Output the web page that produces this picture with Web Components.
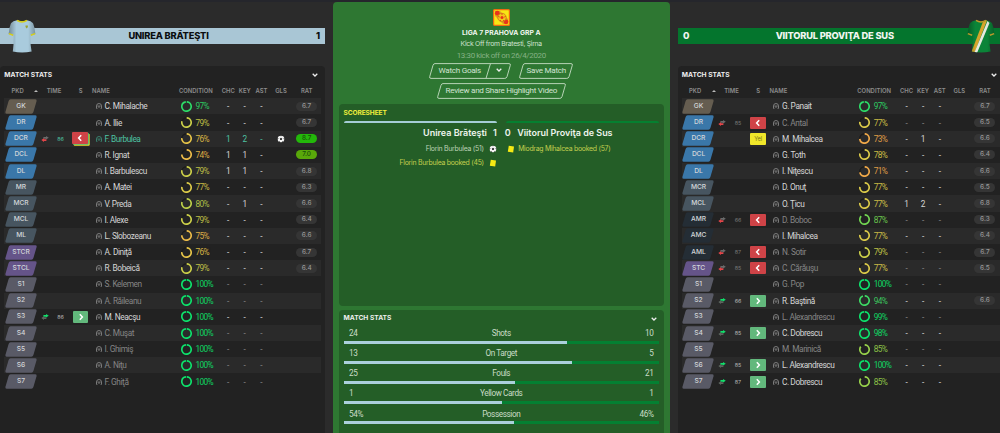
<!DOCTYPE html>
<html lang="en">
<head>
<meta charset="utf-8">
<title>Match Review</title>
<style>
  html, body {
    margin: 0;
    width: 1000px;
    height: 433px;
    overflow: hidden;
    background: #2b2b2b;
  }
</style>
</head>
<body>
<match-review></match-review>

<script>
function attach(el, html) {
  const template = document.createElement('template');
  template.innerHTML = html;
  el.attachShadow({ mode: 'open' });
  el.shadowRoot.appendChild(template.content.cloneNode(true));
}

const homePlayers = [
  // pos, name, condition, chances, key, rating, extras
  ['GK', 'C. Mihalache', 97, '-', '-', '6.7'],
  ['DR', 'A. Ilie', 79, '-', '-', '6.7'],
  ['DCR', 'F. Burbulea', 76, '1', '2', '8.7', { time: '86', sub: 'off', booked: true, goal: true, tone: 'star' }],
  ['DCL', 'R. Ignat', 74, '1', '1', '7.0'],
  ['DL', 'I. Barbulescu', 79, '1', '1', '6.8'],
  ['MR', 'A. Matei', 77, '-', '-', '6.3'],
  ['MCR', 'V. Preda', 80, '-', '1', '6.6'],
  ['MCL', 'I. Alexe', 79, '-', '-', '6.4'],
  ['ML', 'L. Slobozeanu', 75, '-', '-', '6.6'],
  ['STCR', 'A. Diniţă', 76, '-', '-', '6.7'],
  ['STCL', 'R. Bobeică', 79, '-', '-', '6.4'],
  ['S1', 'S. Kelemen', 100, '-', '-', '', { tone: 'dim' }],
  ['S2', 'A. Răileanu', 100, '-', '-', '', { tone: 'dim' }],
  ['S3', 'M. Neacşu', 100, '-', '-', '', { time: '86', sub: 'on' }],
  ['S4', 'C. Muşat', 100, '-', '-', '', { tone: 'dim' }],
  ['S5', 'I. Ghimiş', 100, '-', '-', '', { tone: 'dim' }],
  ['S6', 'A. Niţu', 100, '-', '-', '', { tone: 'dim' }],
  ['S7', 'F. Ghiţă', 100, '-', '-', '', { tone: 'dim' }]
];

const awayPlayers = [
  ['GK', 'G. Panait', 97, '-', '-', '6.7'],
  ['DR', 'C. Antal', 77, '-', '-', '6.5', { time: '85', sub: 'off', tone: 'dim' }],
  ['DCR', 'M. Mihalcea', 73, '-', '1', '6.6', { sub: 'yel' }],
  ['DCL', 'G. Toth', 78, '-', '-', '6.4'],
  ['DL', 'I. Niţescu', 71, '-', '-', '6.6'],
  ['MCR', 'D. Onuţ', 77, '-', '-', '6.5'],
  ['MCL', 'O. Ţicu', 77, '1', '2', '6.8'],
  ['AMR', 'D. Boboc', 87, '-', '-', '6.3', { time: '66', sub: 'off', tone: 'dim' }],
  ['AMC', 'I. Mihalcea', 77, '-', '-', '6.4'],
  ['AML', 'N. Sotir', 79, '-', '-', '6.7', { time: '87', sub: 'off', tone: 'dim' }],
  ['STC', 'C. Cărăuşu', 77, '-', '-', '6.5', { time: '85', sub: 'off', tone: 'dim' }],
  ['S1', 'G. Pop', 100, '-', '-', '', { tone: 'dim' }],
  ['S2', 'R. Baştină', 94, '-', '-', '6.6', { time: '66', sub: 'on' }],
  ['S3', 'L. Alexandrescu', 99, '-', '-', '', { tone: 'dim' }],
  ['S4', 'C. Dobrescu', 98, '-', '-', '', { time: '85', sub: 'on' }],
  ['S5', 'M. Marinică', 85, '-', '-', '', { tone: 'dim' }],
  ['S6', 'L. Alexandrescu', 100, '-', '-', '', { time: '85', sub: 'on' }],
  ['S7', 'C. Dobrescu', 85, '-', '-', '', { time: '87', sub: 'on' }]
];

const columns = '32px 16px 15px 25.5px 11px var(--name-col, 75.5px) 40px 16.5px 16.5px 17px 22px 29.3px';

const chevron = '<svg width="6" height="4" viewBox="0 0 6 4"><path d="M.7.8 3 3 5.3.8" fill="none" stroke="#eee" stroke-width="1.3"/></svg>';

const football = '<svg width="8" height="8" viewBox="0 0 8 8"><circle cx="4" cy="4" r="3.3" fill="#f4f4f4"/><path d="M4 2.7 5.2 3.6 4.8 5H3.2L2.8 3.6ZM3.3.4h1.4L4 1.4ZM.5 2.9 1.6 3.3.8 4.7ZM7.5 2.9 6.4 3.3 7.2 4.7ZM1.8 7 2.4 5.9 3.1 7.3ZM6.2 7 5.6 5.9 4.9 7.3Z" fill="#333"/></svg>';

class PositionPill extends HTMLElement {
  connectedCallback() {
    const pos = this.getAttribute('pos');
    let fill = '#3a77a9';
    if (pos === 'GK') fill = '#655d50';
    else if (/^ST/.test(pos)) fill = '#655489';
    else if (/^AM/.test(pos)) fill = '#242d35';
    else if (/^M/.test(pos)) fill = '#475560';
    else if (/^S/.test(pos)) fill = '#595a66';
    attach(this, `
    <style>
      :host { display: grid; width: 32px; height: 15px; }
      svg, span { grid-area: 1 / 1; }
      span {
        text-align: center;
        font: 500 6.7px/15.8px Inter, sans-serif;
        letter-spacing: -0.1px;
        color: #d3d6d9;
      }
    </style>
    <svg width="32" height="15" viewBox="0 0 32 15">
      <path d="M5.6.3H30.4q1.6 0 1.2 1.6L28.4 13.1q-.5 1.6-2 1.6H1.6q-1.6 0-1.2-1.6L3.6 1.9Q4.1.3 5.6.3Z" fill="${fill}"/>
    </svg>
    <span>${pos}</span>`);
  }
}

class ConditionRing extends HTMLElement {
  connectedCallback() {
    const value = Number(this.getAttribute('value'));
    let color = '#f0a94a';
    if (value >= 98) color = '#0ee26c';
    else if (value >= 97) color = '#2edc69';
    else if (value >= 94) color = '#3fd965';
    else if (value >= 87) color = '#72d653';
    else if (value >= 85) color = '#98d24c';
    else if (value >= 80) color = '#bdd04a';
    else if (value >= 79) color = '#ccd04a';
    else if (value >= 77) color = '#dccb4a';
    else if (value >= 76) color = '#e6c449';
    else if (value >= 74) color = '#edbc49';
    const len = Math.min(value, 97.5) * 0.3;
    const gap = 30 - len;
    attach(this, `
    <style>
      :host {
        display: flex;
        align-items: center;
        gap: 3.4px;
        padding-left: 1px;
        color: ${color};
        font: 8.3px/16px Roboto, sans-serif;
        letter-spacing: -0.6px;
      }
      svg { flex: none; }
      span { opacity: 0.9; }
    </style>
    <svg width="11" height="11" viewBox="0 0 11 11">
      <circle cx="5.5" cy="5.5" r="4.7" fill="none" stroke="#1b1b1b" stroke-width="1.5"/>
      <circle cx="5.5" cy="5.5" r="4.7" fill="none" stroke="${color}" stroke-width="1.7"
        pathLength="30" stroke-dasharray="${len} ${gap}" transform="rotate(-88 5.5 5.5)"/>
    </svg>
    <span>${value}%</span>`);
  }
}

class SubBadge extends HTMLElement {
  connectedCallback() {
    const kind = this.getAttribute('kind');
    const fill = { off: '#cf4347', on: '#62b87c', yel: '#f1e72a' }[kind];
    const arrow = kind === 'off' ? 'M9.2 3.2 6.6 6l2.6 2.8' : 'M6.8 3.2 9.4 6 6.8 8.8';
    const mark = kind === 'yel'
      ? '<span>Yel</span>'
      : `<svg width="16" height="12" viewBox="0 0 16 12"><path d="${arrow}" fill="none" stroke="#fff" stroke-width="1.5"/></svg>`;
    attach(this, `
    <style>
      :host {
        display: grid;
        place-items: center;
        width: 15.5px;
        height: 12px;
        border-radius: 1px;
        background: ${fill};
      }
      :host([booked]) {
        margin: -1px 1.5px 0 0;
        box-shadow: 0.8px 0.8px 0 #50b878, 1.7px 1.7px 0 #e8df2c;
      }
      span { font: 5.6px/12px Inter, sans-serif; color: #77731d; }
    </style>
    ${mark}`);
  }
}

class PlayerRow extends HTMLElement {
  set player(p) {
    const [pos, name, cond, chc, key, rat, extra = {}] = p;
    const moving = extra.sub === 'on' || extra.sub === 'off';
    const first = extra.sub === 'on' ? '#12df6b' : '#6b6b6b';
    const second = extra.sub === 'on' ? '#5d665f' : '#e34549';
    const swap = moving ? `
      <svg width="8" height="6" viewBox="0 0 8 6">
        <path d="M2.4 1.1H5V0L7.8 1.8 5 3.6V2.8H2.4Z" fill="${first}"/>
        <path d="M5.4 3.2H3V2.3L.3 4.1 3 5.9V4.9H5.4Z" fill="${second}"/>
      </svg>` : '';
    const badge = extra.sub ? `<sub-badge kind="${extra.sub}" ${extra.booked ? 'booked' : ''}></sub-badge>` : '';
    const tone = { star: '#4ec3a3', dim: '#858585' }[extra.tone] || '#d6d6d6';
    const hot = { '8.7': '#23b80a', '7.0': '#59a80a' }[rat];

    attach(this, `
    <style>
      :host {
        display: grid;
        grid-template-columns: ${columns};
        align-items: center;
        justify-items: center;
        height: 16.2px;
        font: 8.3px/16px Roboto, sans-serif;
        color: ${tone};
      }
      .time { font: 5.4px/16px Inter, sans-serif; color: ${extra.tone === 'star' ? '#4ec3a3' : extra.sub === 'on' ? '#b5b5b5' : '#777'}; }
      .name { justify-self: start; letter-spacing: -0.42px; white-space: nowrap; }
      condition-ring { justify-self: start; }
      .rat {
        width: 21px;
        height: 9px;
        border-radius: 5px;
        background: ${hot || '#353535'};
        color: ${hot ? '#1a510b' : '#999'};
        text-align: center;
        font: 500 6.4px/9.6px Inter, sans-serif;
      }
      svg { display: block; }
    </style>
    <position-pill pos="${pos}"></position-pill>
    <div>${swap}</div>
    <div class="time">${moving ? extra.time : ''}</div>
    <div>${badge}</div>
    <svg width="6" height="6" viewBox="0 0 6 6"><path d="M1.4 5.4H.5V3Q.5.5 3 .5T5.5 3V5.4H4.6M2.1 2.3V3.8Q3 4.8 3.9 3.8V2.3" fill="none" stroke="${extra.tone === 'star' ? '#3b8a76' : '#858585'}" stroke-width=".9"/></svg>
    <div class="name">${name}</div>
    <condition-ring value="${cond}"></condition-ring>
    <div>${chc}</div>
    <div>${key}</div>
    <div>-</div>
    <div>${extra.goal ? football : ''}</div>
    ${rat ? `<div class="rat">${rat}</div>` : ''}`);
  }
}

class TeamBanner extends HTMLElement {
  connectedCallback() {
    attach(this, `
    <style>
      :host {
        display: grid;
        grid-template: 15.4px / 44px 1fr 32px;
        align-items: center;
        height: 15.4px;
        margin-top: 28.3px;
        background: #a9c6d5;
        color: #0b0e10;
        font: 800 9.3px/16px Inter, sans-serif;
        letter-spacing: -0.2px;
        text-align: center;
      }
      :host([side="away"]) {
        grid-template: 15.4px / 32px 1fr 40px;
        background: #04752d;
        color: #f0f5f0;
      }
      ::slotted([slot="kit"]) { justify-self: start; margin-left: 8px; }
      :host([side="away"]) ::slotted([slot="kit"]) { justify-self: end; margin: 0 5px 0 0; order: 3; }
      :host([side="away"]) .score { order: 1; text-align: left; padding-left: 5.5px; }
      :host([side="away"]) .name { order: 2; }
      .name { white-space: nowrap; }
      .score { text-align: right; padding-right: 5px; }
    </style>
    <slot name="kit"></slot>
    <div class="name"><slot></slot></div>
    <div class="score">${this.getAttribute('score')}</div>`);
  }
}

class TeamKit extends HTMLElement {
  connectedCallback() {
    const away = this.getAttribute('side') === 'away';
    const shirt = 'M9 1.2Q14 3.2 19 1.2Q23 1.8 25 4.2Q27 9 27.4 15L22.8 16.6L22.4 14Q22 24 23.6 32.6Q14 34.6 4.8 32.6Q6 24 5.6 14L5.2 16.6L.6 15Q1 9 3 4.2Q5 1.8 9 1.2Z';
    const trim = away ? '#b99a2a' : '#d8cf16';
    attach(this, `
    <style>
      :host { display: block; width: 28px; height: 34px; }
      svg { display: block; }
    </style>
    <svg width="28" height="34" viewBox="0 0 28 34">
      <defs>
        <clipPath id="c"><path d="${shirt}"/></clipPath>
        <linearGradient id="g" x2="1">
          <stop offset="0" stop-opacity=".35"/><stop offset=".3" stop-opacity="0"/>
          <stop offset=".72" stop-opacity="0"/><stop offset="1" stop-opacity=".3"/>
        </linearGradient>
      </defs>
      <g clip-path="url(#c)">
        <rect width="28" height="34" fill="${away ? '#0b8438' : '#a9cbdd'}"/>
        ${away
          ? '<path d="M17 0H20.5L7.5 34H4Z" fill="#d6a52c"/><path d="M20.5 2 22.5 4 10 34H7.2Z" fill="#e8e9df"/>'
          : '<path d="M17.5 6.5h2.4v1.5l-1.2 1.4-1.2-1.4Z" fill="#9aa332"/>'}
        <rect width="28" height="34" fill="url(#g)"/>
      </g>
      <path d="M9 1.4Q14 4.4 19 1.4" fill="none" stroke="${trim}" stroke-width="1.5"/>
      <path d="M.8 14.6 5.2 16.2M22.8 16.2 27.2 14.6" stroke="${trim}" stroke-width="1.5"/>
    </svg>`);
  }
}

class TeamTable extends HTMLElement {
  connectedCallback() {
    const away = this.getAttribute('side') === 'away';
    attach(this, `
    <style>
      :host {
        display: block;
        box-sizing: border-box;
        height: 367px;
        margin-top: 22.3px;
        padding: 0 3.7px 0 4.3px;
        border-radius: 4px 4px 0 0;
        background: #222;
        overflow: hidden;
      }
      :host([side="away"]) { --name-col: 76.3px; padding-right: 2.9px; }
      .title {
        display: flex;
        justify-content: space-between;
        align-items: center;
        box-sizing: border-box;
        height: 17px;
        padding: 2px 3px 0 0;
        font: 700 6.7px/15px Inter, sans-serif;
        color: #eee;
      }
      .head {
        display: grid;
        grid-template-columns: ${columns};
        justify-items: center;
        height: 15.3px;
        padding-left: .7px;
        font: 600 5.9px/16px Inter, sans-serif;
        color: #8d8d8d;
      }
      .pkd { justify-self: start; padding-left: 6.5px; }
      .sort { justify-self: start; margin: 6px 0 0 -2.5px; }
      .head svg { display: block; }
      .time { grid-column: 3; margin-left: -13px; }
      .name { grid-column: 5 / 7; justify-self: start; margin-left: -1.5px; }
      .cond { justify-self: start; margin-left: -1px; }
      player-row { padding-left: .7px; }
      player-row:nth-child(odd) { background: #2a2a2a; }
    </style>
    <div class="title"><span>MATCH STATS</span>${chevron}</div>
    <div class="head">
      <span class="pkd">PKD</span>
      <svg class="sort" width="4" height="4" viewBox="0 0 4 4"><path d="M0 3 2 1 4 3Z" fill="#bbb"/></svg>
      <span class="time">TIME</span>
      <span>S</span>
      <span class="name">NAME</span>
      <span class="cond">CONDITION</span>
      <span>CHC</span><span>KEY</span><span>AST</span><span>GLS</span><span>RAT</span>
    </div>
    <div class="rows"></div>`);
    const rows = this.shadowRoot.querySelector('.rows');
    (away ? awayPlayers : homePlayers).forEach(p => {
      const row = document.createElement('player-row');
      row.player = p;
      rows.appendChild(row);
    });
  }
}

class SlantButton extends HTMLElement {
  connectedCallback() {
    const w = Number(this.getAttribute('width'));
    const split = this.hasAttribute('menu');
    attach(this, `
    <style>
      :host {
        display: grid;
        width: ${w}px;
        height: 16px;
        font: 8.1px/15px Roboto, sans-serif;
        color: #d3e3d2;
        text-align: center;
      }
      svg.frame, .label { grid-area: 1 / 1; }
      .label { display: flex; justify-content: center; align-items: center; height: 15px; white-space: nowrap; letter-spacing: -0.28px; }
      .menu { width: 23px; line-height: 0; padding-right: 1px; }
      .text { flex: 1; }
      .menu ~ .text, .split { padding-left: 3px; }
    </style>
    <svg class="frame" width="${w}" height="16" viewBox="0 0 ${w} 16" fill="none" stroke="#b7d3b6">
      <path d="M6 .6H${w - 2}q1.8 0 1.3 1.7L${w - 4} 13.7q-.6 1.7-2.2 1.7H2q-1.8 0-1.3-1.7L4 2.3Q4.5.6 6 .6Z"/>
      ${split ? `<path d="M${w - 20.5} .6 ${w - 25} 15.4"/>` : ''}
    </svg>
    <div class="label"><span class="text ${split ? 'split' : ''}"><slot></slot></span>${split ? `<span class="menu">${chevron}</span>` : ''}</div>`);
  }
}

class StatBar extends HTMLElement {
  connectedCallback() {
    const [home, away, share] = ['home', 'away', 'share'].map(a => this.getAttribute(a));
    attach(this, `
    <style>
      :host { display: block; height: 20.1px; font: 8.2px/16px Roboto, sans-serif; color: #c9dcc6; letter-spacing: -0.4px; }
      .line { display: grid; grid-template-columns: 1fr 2fr 1fr; height: 15.7px; padding: 0 5.5px; text-align: center; }
      .line :first-child { text-align: left; }
      .line :last-child { text-align: right; }
      .bar { height: 3px; background: #048032; }
      .fill { width: ${share}%; height: 3px; background: #abd0dc; }
    </style>
    <div class="line"><span>${home}</span><span><slot></slot></span><span>${away}</span></div>
    <div class="bar"><div class="fill"></div></div>`);
  }
}

class ScoreSheet extends HTMLElement {
  connectedCallback() {
    const card = '<svg width="8" height="8" viewBox="0 0 8 8"><path d="M1.8.8 7 1.4 6.2 7.4.8 6.8Z" fill="#f5e914"/></svg>';
    attach(this, `
    <style>
      :host {
        display: block;
        box-sizing: border-box;
        height: 202px;
        padding: 0 5px;
        border-radius: 4px;
        background: #245e27;
      }
      .title { font: 700 6.6px/19px Inter, sans-serif; height: 17.3px; color: #f0ee3c; letter-spacing: -0.1px; }
      .cols { display: grid; grid-template-columns: 1fr 1fr; column-gap: 9px; }
      .tab { height: 2.2px; border-radius: 3px 3px 0 0; background: #a5cdd6; }
      .tab.away { background: #058030; }
      .side { display: flex; flex-direction: column; color: #bdd3b5; font: 6.9px/14px Inter, sans-serif; letter-spacing: -0.26px; }
      .side > div { display: flex; align-items: center; gap: 5.5px; height: 14px; white-space: nowrap; }
      .home > div { justify-content: flex-end; padding-right: 0; margin-right: -.6px; }
      .away > div { gap: 3px; padding-left: 1.4px; }
      .side > .club { font: 600 9px/19px Inter, sans-serif; height: 19px; color: #eef4ec; letter-spacing: -0.02px; }
      .home > .club { gap: 6px; margin-right: 0; }
      .away > .club { gap: 6.5px; padding-left: 0; margin-left: -1px; }
      .side > .booked { color: #c3cf4e; }
    </style>
    <div class="title">SCORESHEET</div>
    <div class="cols">
      <div class="tab"></div><div class="tab away"></div>
      <div class="side home">
        <div class="club"><span>Unirea Brăteşti</span><span>1</span></div>
        <div><span>Florin Burbulea (51)</span>${football}</div>
        <div class="booked"><span>Florin Burbulea booked (45)</span>${card}</div>
      </div>
      <div class="side away">
        <div class="club"><span>0</span><span>Viitorul Proviţa de Sus</span></div>
        <div class="booked">${card}<span>Miodrag Mihalcea booked (57)</span></div>
      </div>
    </div>`);
  }
}

class MatchCentre extends HTMLElement {
  connectedCallback() {
    attach(this, `
    <style>
      :host {
        display: flex;
        flex-direction: column;
        box-sizing: border-box;
        width: 337px;
        height: 431px;
        margin-top: 2px;
        padding: 7px 6px 0 5.5px;
        border-radius: 4px 4px 0 0;
        background: #2e7732;
        text-align: center;
        overflow: hidden;
      }
      .crest { align-self: center; }
      .crest, h1, .venue, .kickoff, .actions, score-sheet, .stats { flex: none; }
      h1 { margin: 0; font: 700 6.8px/13.5px Inter, sans-serif; color: #f1f6f0; }
      .venue { font: 6.8px/8px Inter, sans-serif; color: #d0e2cf; letter-spacing: -0.28px; }
      .kickoff { font: 8px/15.5px Roboto, sans-serif; color: #85b184; height: 15px; letter-spacing: -0.38px; }
      .actions { display: flex; justify-content: center; gap: 8px; box-sizing: border-box; height: 20.7px; padding-top: .3px; }
      score-sheet, .stats { text-align: left; }
      .stats {
        box-sizing: border-box;
        height: 140px;
        margin-top: 4px;
        padding: 0 5px;
        border-radius: 4px;
        background: #245e27;
      }
      .title {
        display: flex;
        justify-content: space-between;
        align-items: center;
        box-sizing: border-box;
        height: 15.3px;
        padding: 2px 2px 0 0;
        font: 700 6.7px/15px Inter, sans-serif;
        color: #eee;
      }
    </style>
    <svg class="crest" width="17" height="17" viewBox="0 0 17 17">
      <rect x=".6" y=".6" width="15.8" height="15.8" rx="1" fill="#f8e714" stroke="#ee6b12" stroke-width="1.2"/>
      <path d="M2 2H7L15 10V15H10L2 7Z" fill="#dda11f"/>
      <circle cx="4.3" cy="4.2" r="2.4" fill="#e8321b"/>
      <circle cx="13" cy="12.8" r="2.4" fill="#e8321b"/>
      <circle cx="9" cy="8.5" r="4.2" fill="#f3c719" stroke="#c86e1b" stroke-width=".7"/>
      <circle cx="9" cy="8.5" r="1.5" fill="#e8321b"/>
      <path d="M9 4.6V5.8M12.6 7.5 11.4 8M11 12 10.4 11M7 12 7.6 11M5.4 7.5 6.6 8" stroke="#e8321b"/>
    </svg>
    <h1>LIGA 7 PRAHOVA GRP A</h1>
    <div class="venue">Kick Off from Bratesti, Şirna</div>
    <div class="kickoff">13:30 kick off on 26/4/2020</div>
    <div class="actions">
      <slant-button width="82" menu>Watch Goals</slant-button>
      <slant-button width="54">Save Match</slant-button>
    </div>
    <div class="actions">
      <slant-button width="129">Review and Share Highlight Video</slant-button>
    </div>
    <score-sheet></score-sheet>
    <div class="stats">
      <div class="title"><span>MATCH STATS</span>${chevron}</div>
      <stat-bar home="24" away="10" share="70.8">Shots</stat-bar>
      <stat-bar home="13" away="5" share="72.3">On Target</stat-bar>
      <stat-bar home="25" away="21" share="54.3">Fouls</stat-bar>
      <stat-bar home="1" away="1" share="50.2">Yellow Cards</stat-bar>
      <stat-bar home="54%" away="46%" share="54">Possession</stat-bar>
    </div>`);
  }
}

class MatchReview extends HTMLElement {
  connectedCallback() {
    attach(this, `
    <style>
      :host {
        display: grid;
        grid-template-columns: 325px 337px 325px;
        column-gap: 8px;
        width: 1008px;
        height: 433px;
        background: linear-gradient(#25262c 2px, #2b2b2b 2px);
        overflow: hidden;
      }
      .team { display: flow-root; }
      .team.right { margin-left: -0.5px; width: 325px; }
      .right team-banner { width: 322.5px; }
    </style>
    <div class="team">
      <team-banner side="home" score="1"><team-kit slot="kit" side="home"></team-kit>UNIREA BRĂTEŞTI</team-banner>
      <team-table side="home"></team-table>
    </div>
    <match-centre></match-centre>
    <div class="team right">
      <team-banner side="away" score="0"><team-kit slot="kit" side="away"></team-kit>VIITORUL PROVIŢA DE SUS</team-banner>
      <team-table side="away"></team-table>
    </div>`);
  }
}

customElements.define('position-pill', PositionPill);
customElements.define('condition-ring', ConditionRing);
customElements.define('sub-badge', SubBadge);
customElements.define('player-row', PlayerRow);
customElements.define('team-kit', TeamKit);
customElements.define('team-banner', TeamBanner);
customElements.define('team-table', TeamTable);
customElements.define('slant-button', SlantButton);
customElements.define('stat-bar', StatBar);
customElements.define('score-sheet', ScoreSheet);
customElements.define('match-centre', MatchCentre);
customElements.define('match-review', MatchReview);
</script>
</body>
</html>
